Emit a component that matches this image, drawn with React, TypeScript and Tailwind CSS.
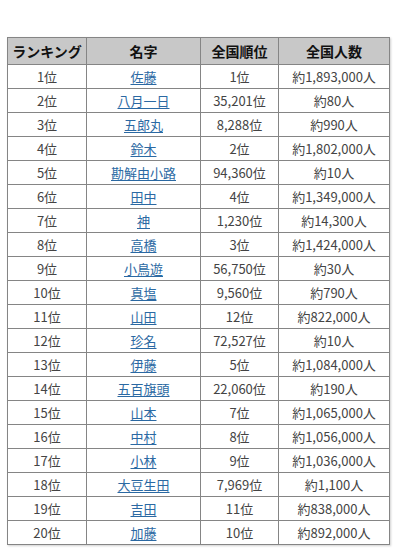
const rows: [string, string, string, string, boolean][] = [
  ["1位", "佐藤", "1位", "約1,893,000人", true],
  ["2位", "八月一日", "35,201位", "約80人", true],
  ["3位", "五郎丸", "8,288位", "約990人", true],
  ["4位", "鈴木", "2位", "約1,802,000人", true],
  ["5位", "勘解由小路", "94,360位", "約10人", true],
  ["6位", "田中", "4位", "約1,349,000人", true],
  ["7位", "神", "1,230位", "約14,300人", true],
  ["8位", "高橋", "3位", "約1,424,000人", true],
  ["9位", "小鳥遊", "56,750位", "約30人", true],
  ["10位", "真塩", "9,560位", "約790人", true],
  ["11位", "山田", "12位", "約822,000人", true],
  ["12位", "珍名", "72,527位", "約10人", true],
  ["13位", "伊藤", "5位", "約1,084,000人", true],
  ["14位", "五百旗頭", "22,060位", "約190人", true],
  ["15位", "山本", "7位", "約1,065,000人", true],
  ["16位", "中村", "8位", "約1,056,000人", true],
  ["17位", "小林", "9位", "約1,036,000人", true],
  ["18位", "大豆生田", "7,969位", "約1,100人", true],
  ["19位", "吉田", "11位", "約838,000人", true],
  ["20位", "加藤", "10位", "約892,000人", true],
];

const headers = ["ランキング", "名字", "全国順位", "全国人数"];

export default function App() {
  return (
    <div className="min-h-[550px] bg-white pl-[7px] pt-[37px] font-['Noto_Sans_CJK_JP','Noto_Sans',sans-serif]">
      <table className="w-[382px] table-fixed border-collapse shadow-[1px_1px_2px_#d0d0d0]">
        <colgroup>
          <col className="w-[79px]" />
          <col className="w-[114px]" />
          <col className="w-[78px]" />
          <col className="w-[111px]" />
        </colgroup>
        <thead>
          <tr className="h-[27px] bg-[#c8c8c8]">
            {headers.map((h) => (
              <th
                key={h}
                className="border border-[#858585] p-0 text-center text-[14px] font-bold leading-none text-[#111]"
              >
                {h}
              </th>
            ))}
          </tr>
        </thead>
        <tbody>
          {rows.map(([rank, name, national, count]) => (
            <tr key={rank} className="h-[24px]">
              <td className="border border-[#858585] p-0 text-center text-[13px] leading-none text-[#444]">
                {rank}
              </td>
              <td className="border border-[#858585] p-0 text-center text-[13px] leading-none">
                <a href="#" className="text-[#2b69a3] underline underline-offset-2">
                  {name}
                </a>
              </td>
              <td className="border border-[#858585] p-0 text-center text-[13px] leading-none text-[#444]">
                {national}
              </td>
              <td className="border border-[#858585] p-0 text-center text-[13px] leading-none text-[#444]">
                {count}
              </td>
            </tr>
          ))}
        </tbody>
      </table>
    </div>
  );
}
